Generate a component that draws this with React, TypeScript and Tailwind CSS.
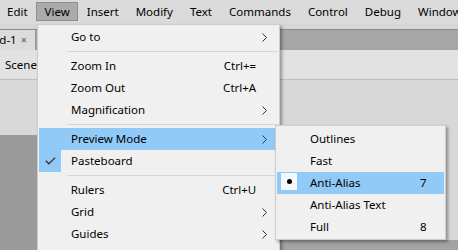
import React from "react";

const font = { fontFamily: '"Noto Sans", "Open Sans", sans-serif' };

function Chevron() {
  return (
    <svg width="5" height="9" viewBox="0 0 5 9" className="block">
      <path d="M0.5 0.5 L4.5 4.5 L0.5 8.5" fill="none" stroke="#333" strokeWidth="1" />
    </svg>
  );
}

function Check() {
  return (
    <svg width="11" height="8" viewBox="0 0 11 8" className="block">
      <path d="M0.8 3.8 L3.8 6.8 L10.2 0.6" fill="none" stroke="#333" strokeWidth="1.3" />
    </svg>
  );
}

type Item = {
  label?: string;
  shortcut?: string;
  arrow?: boolean;
  sep?: boolean;
  active?: boolean;
  checked?: boolean;
};

const mainItems: Item[] = [
  { label: "Go to", arrow: true },
  { sep: true },
  { label: "Zoom In", shortcut: "Ctrl+=" },
  { label: "Zoom Out", shortcut: "Ctrl+A" },
  { label: "Magnification", arrow: true },
  { sep: true },
  { label: "Preview Mode", arrow: true, active: true },
  { label: "Pasteboard", checked: true },
  { sep: true },
  { label: "Rulers", shortcut: "Ctrl+U" },
  { label: "Grid", arrow: true },
  { label: "Guides", arrow: true },
];

const subItems = [
  { label: "Outlines" },
  { label: "Fast" },
  { label: "Anti-Alias", shortcut: "7", active: true, bullet: true },
  { label: "Anti-Alias Text" },
  { label: "Full", shortcut: "8" },
];

export default function App() {
  const menubar = ["Edit", "View", "Insert", "Modify", "Text", "Commands", "Control", "Debug", "Window"];
  return (
    <div className="relative w-[458px] h-[250px] overflow-hidden bg-[#d8d8d8] text-[11.5px] text-black" style={font}>
      {/* Menu bar */}
      <div className="flex h-[24px] items-center bg-[#dadada] -ml-[1.5px] whitespace-nowrap">
        {menubar.map((m) => (
          <div
            key={m}
            className={
              m === "View"
                ? "flex h-[19px] items-center px-[7.5px] mt-[-1px] bg-[#ababab] border border-[#8f8f8f]"
                : "flex h-[19px] items-center px-[8.5px] mt-[-1px]"
            }
          >
            {m}
          </div>
        ))}
      </div>
      {/* Under menubar strip */}
      <div className="h-[5px] bg-[#d6d6d6]" />
      {/* Tab bar */}
      <div className="flex h-[21px] bg-[#a6a6a6] border-t border-[#8a8a8a]">
        <div className="flex w-[36px] justify-end overflow-hidden bg-[#dcdcdc] border-r border-[#9a9a9a]">
          <div className="flex items-center whitespace-nowrap pr-[8px]">
            <span>Untitled-1</span>
            <span className="ml-[4px] text-[11px] text-[#555]">×</span>
          </div>
        </div>
      </div>
      {/* Edit bar */}
      <div className="flex h-[30px] items-center bg-[#e2e2e2] border-b border-[#bdbdbd] pl-[5px] whitespace-nowrap">
        Scene 1
      </div>
      {/* Stage */}
      <div className="flex h-[170px]">
        <div className="flex w-[37px] flex-col">
          <div className="h-[55px] bg-[#d9d9d9]" />
          <div className="flex-1 bg-[#9b9b9b]" />
        </div>
        <div className="flex flex-1 flex-col">
          <div className="h-[160px] bg-[#d8d8d8]" />
          <div className="flex-1 bg-[#a3a3a3]" />
        </div>
      </div>

      {/* Main dropdown */}
      <div className="absolute left-[37px] top-[24px] w-[243px] bg-[#f0f0f0] border border-[#cccccc] p-[1px] shadow-[2px_2px_3px_rgba(0,0,0,0.35)]">
        {mainItems.map((it, i) =>
          it.sep ? (
            <div key={i} className="flex h-[7px] items-center">
              <div className="ml-[28px] h-px flex-1 bg-[#d7d7d7]" />
            </div>
          ) : (
            <div key={i} className={"flex h-[22px] items-center whitespace-nowrap " + (it.active ? "bg-[#91c9f7]" : "")}>
              <div className={"flex h-[22px] w-[22px] items-center justify-center " + (it.checked ? "bg-[#91c9f7]" : "")}>
                {it.checked ? <Check /> : null}
              </div>
              <div className="w-[164px] pl-[10px]">{it.label}</div>
              <div className="flex-1">{it.shortcut}</div>
              <div className="mr-[6px] flex w-[16px] justify-center">{it.arrow ? <Chevron /> : null}</div>
            </div>
          )
        )}
        <div className="h-[30px]" />
      </div>

      {/* Submenu */}
      <div className="absolute left-[275px] top-[125px] w-[171px] bg-[#f0f0f0] border border-[#cccccc] px-[1px] pt-[2px] pb-[1px] shadow-[2px_2px_3px_rgba(0,0,0,0.35)]">
        {subItems.map((it, i) => (
          <div key={i} className={"flex h-[22px] items-center whitespace-nowrap " + (it.active ? "bg-[#91c9f7]" : "")}>
            <div className="flex h-[22px] w-[33px] items-start">
              {it.bullet ? (
                <div className="ml-[4px] mt-[1px] flex h-[17px] w-[16px] items-center justify-center bg-[#f3f8fd]">
                  <div className="h-[5px] w-[5px] rounded-full bg-black" />
                </div>
              ) : null}
            </div>
            <div className="w-[110px]">{it.label}</div>
            <div className="flex-1">{it.shortcut}</div>
          </div>
        ))}
      </div>
    </div>
  );
}
